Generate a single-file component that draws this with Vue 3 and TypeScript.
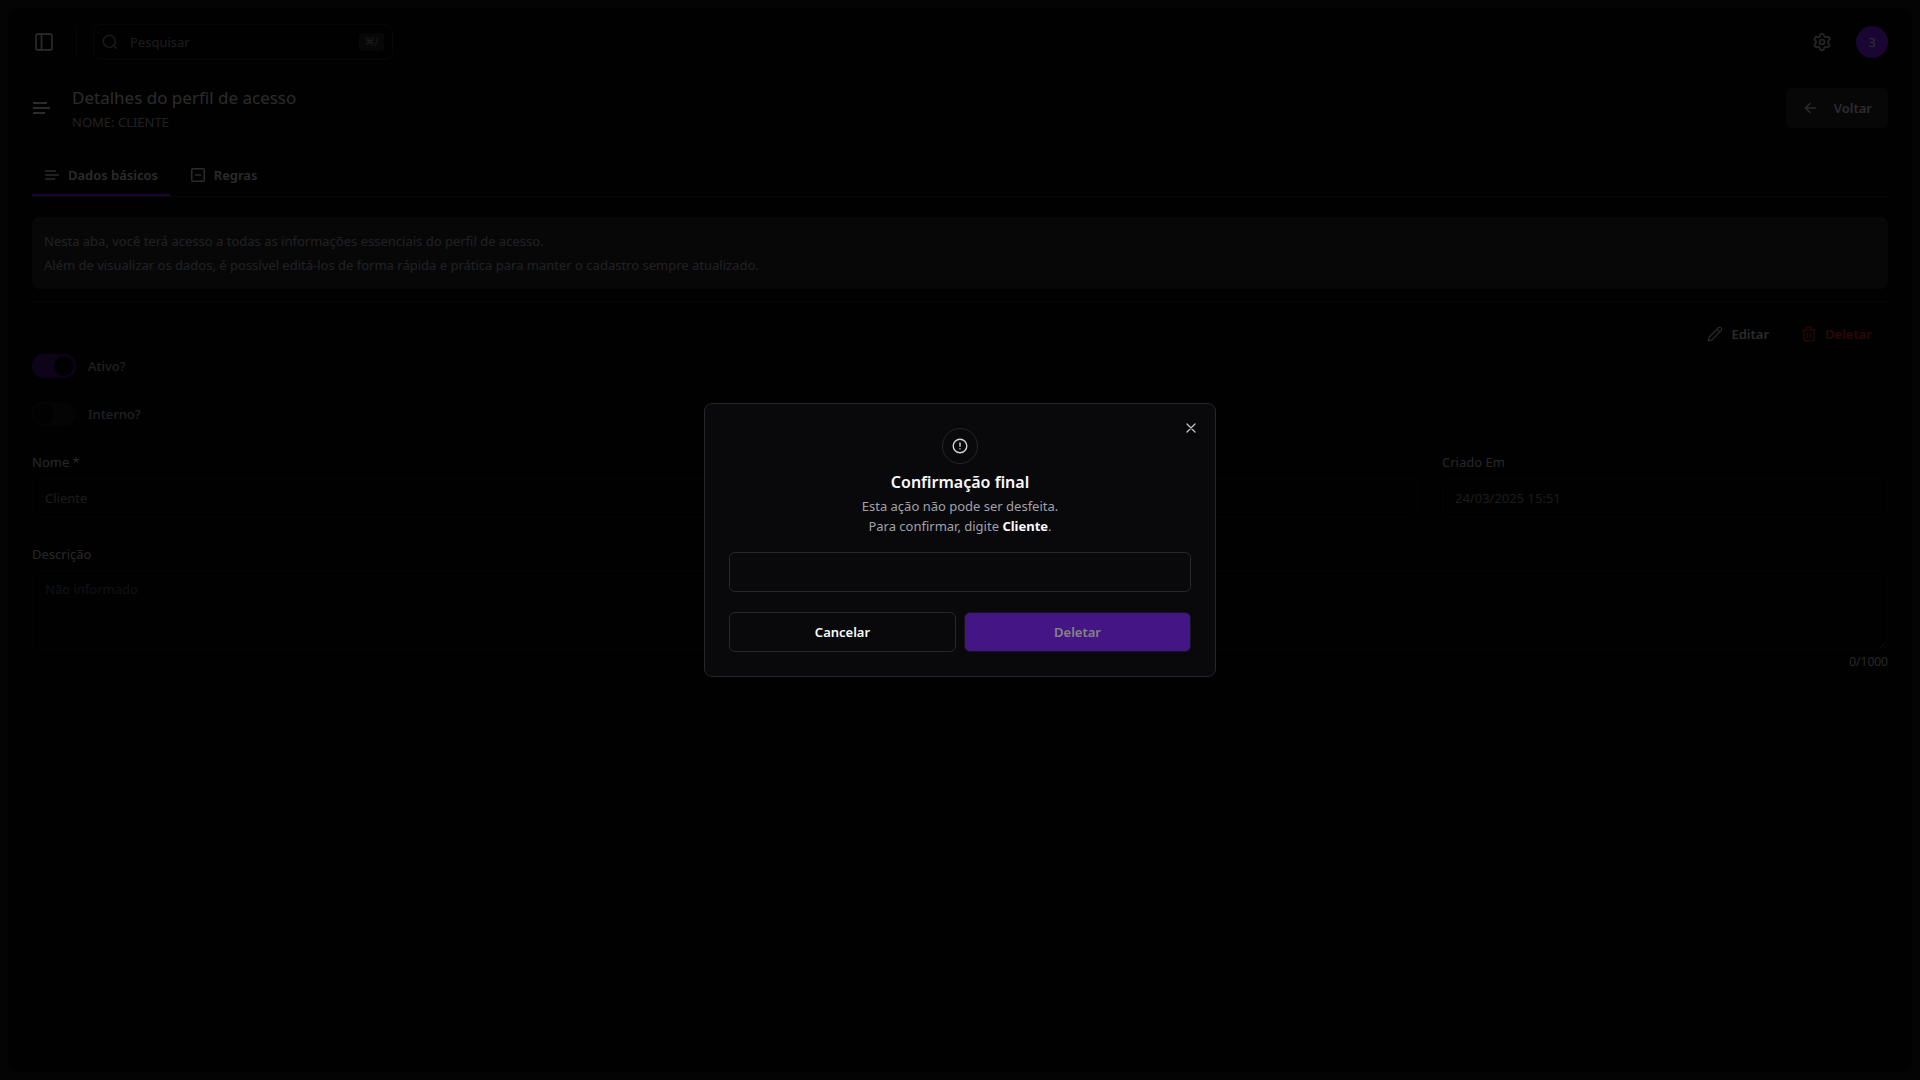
<script setup lang="ts">
import { ref } from 'vue'

const search = ref('')
const active = ref(true)
const internal = ref(false)
const name = ref('Cliente')
const createdAt = ref('24/03/2025 15:51')
const description = ref('')
const confirmation = ref('')
const maxLength = 1000
</script>

<template>
  <div class="shell">
    <div class="panel">
      <header class="topbar">
        <button class="icon-button" type="button" aria-label="Alternar menu">
          <svg width="20" height="20" viewBox="0 0 24 24" fill="none" stroke="currentColor" stroke-width="2" stroke-linecap="round" stroke-linejoin="round">
            <rect x="2.5" y="2.5" width="19" height="19" rx="2" />
            <path d="M9 2.5v19" />
          </svg>
        </button>
        <span class="divider"></span>
        <label class="search">
          <svg width="16" height="16" viewBox="0 0 24 24" fill="none" stroke="currentColor" stroke-width="2" stroke-linecap="round">
            <circle cx="11" cy="11" r="9" />
            <path d="m21.5 21.5-4-4" />
          </svg>
          <input v-model="search" type="text" placeholder="Pesquisar" aria-label="Pesquisar" />
          <kbd>⌘/</kbd>
        </label>
        <div class="topbar-end">
          <button class="icon-button" type="button" aria-label="Configurações">
            <svg width="20" height="20" viewBox="0 0 24 24" fill="none" stroke="currentColor" stroke-width="2" stroke-linecap="round" stroke-linejoin="round">
              <path d="M9.671 4.136a2.34 2.34 0 0 1 4.659 0 2.34 2.34 0 0 0 3.319 1.915 2.34 2.34 0 0 1 2.33 4.033 2.34 2.34 0 0 0 0 3.831 2.34 2.34 0 0 1-2.33 4.033 2.34 2.34 0 0 0-3.319 1.915 2.34 2.34 0 0 1-4.659 0 2.34 2.34 0 0 0-3.32-1.915 2.34 2.34 0 0 1-2.33-4.033 2.34 2.34 0 0 0 0-3.831A2.34 2.34 0 0 1 6.35 6.051a2.34 2.34 0 0 0 3.319-1.915" />
              <circle cx="12" cy="12" r="3" />
            </svg>
          </button>
          <button class="avatar" type="button">3</button>
        </div>
      </header>

      <main class="content">
        <div class="heading">
          <svg width="20" height="20" viewBox="0 0 20 20" fill="none" stroke="currentColor" stroke-width="2">
            <path d="M1 5h14M1 10h17M1 15h12" />
          </svg>
          <div class="heading-text">
            <h1>Detalhes do perfil de acesso</h1>
            <p>NOME: CLIENTE</p>
          </div>
          <button class="back" type="button">
            <svg width="16" height="16" viewBox="0 0 16 16" fill="none" stroke="currentColor" stroke-width="1.5" stroke-linecap="round" stroke-linejoin="round">
              <path d="M13.5 8h-10M8 3.500 3.500 8 8 12.500" />
            </svg>
            Voltar
          </button>
        </div>

        <nav class="tabs">
          <button class="tab tab-active" type="button">
            <svg width="16" height="16" viewBox="0 0 16 16" fill="none" stroke="currentColor" stroke-width="1.500">
              <path d="M1 4h11M1 8h14M1 12h10" />
            </svg>
            Dados básicos
          </button>
          <button class="tab" type="button">
            <svg width="16" height="16" viewBox="0 0 16 16" fill="none" stroke="currentColor" stroke-width="1.500">
              <rect x="1.700" y="1.700" width="12.600" height="12.600" rx="1.500" />
              <path d="M5 8h6" />
            </svg>
            Regras
          </button>
        </nav>

        <div class="notice">
          <p>Nesta aba, você terá acesso a todas as informações essenciais do perfil de acesso.</p>
          <p>Além de visualizar os dados, é possível editá-los de forma rápida e prática para manter o cadastro sempre atualizado.</p>
        </div>

        <hr />

        <div class="actions">
          <button class="action" type="button">
            <svg width="16" height="16" viewBox="0 0 16 16" fill="none" stroke="currentColor" stroke-width="1.200" stroke-linejoin="round">
              <path d="M1.200 14.800 2.200 11 11.300 1.900a1.900 1.900 0 0 1 2.800 2.800L5 13.800ZM10 3.200l2.800 2.800" />
            </svg>
            Editar
          </button>
          <button class="action action-danger" type="button">
            <svg width="16" height="16" viewBox="0 0 16 16" fill="none" stroke="currentColor" stroke-width="1.200" stroke-linejoin="round">
              <path d="M1.500 4h13M5.500 4V1.200h5V4M3 4v9.800a1 1 0 0 0 1 1h8a1 1 0 0 0 1-1V4M6.500 7v5M9.500 7v5" />
            </svg>
            Deletar
          </button>
        </div>

        <div class="switches">
          <label class="switch-row">
            <input v-model="active" type="checkbox" role="switch" disabled />
            <span>Ativo?</span>
          </label>
          <label class="switch-row">
            <input v-model="internal" type="checkbox" role="switch" disabled />
            <span>Interno?</span>
          </label>
        </div>

        <div class="fields">
          <div class="field field-name">
            <label for="name">Nome *</label>
            <input id="name" v-model="name" type="text" disabled />
          </div>
          <div class="field">
            <label for="created">Criado Em</label>
            <input id="created" v-model="createdAt" type="text" disabled />
          </div>
          <div class="field field-full">
            <label for="description">Descrição</label>
            <textarea id="description" v-model="description" placeholder="Não informado" :maxlength="maxLength" disabled></textarea>
            <p class="counter">{{ description.length }}/{{ maxLength }}</p>
          </div>
        </div>
      </main>
    </div>
  </div>

  <div class="overlay">
    <form class="dialog" role="alertdialog" aria-labelledby="dialog-title" aria-describedby="dialog-text" @submit.prevent>
      <button class="close" type="button" aria-label="Fechar">
        <svg width="16" height="16" viewBox="0 0 16 16" fill="none" stroke="currentColor" stroke-width="1.300" stroke-linecap="round">
          <path d="m4 4 8 8M12 4l-8 8" />
        </svg>
      </button>
      <div class="badge">
        <svg width="16" height="16" viewBox="0 0 16 16" fill="none" stroke="currentColor" stroke-width="1.400" stroke-linecap="round">
          <circle cx="8" cy="8" r="6.800" />
          <path d="M8 5v3.300M8 10.700v.1" />
        </svg>
      </div>
      <h2 id="dialog-title">Confirmação final</h2>
      <p id="dialog-text" class="dialog-text">
        Esta ação não pode ser desfeita.<br />
        Para confirmar, digite <strong>Cliente</strong>.
      </p>
      <input v-model="confirmation" class="confirm" type="text" aria-label="Confirmação" />
      <div class="dialog-actions">
        <button class="cancel" type="button">Cancelar</button>
        <button class="delete" type="submit" :disabled="confirmation !== name">Deletar</button>
      </div>
    </form>
  </div>
</template>

<style>
body {
  margin: 0;
  background: #18181b;
}
</style>

<style scoped>
*,
*::before,
*::after {
  box-sizing: border-box;
}

.shell,
.overlay {
  color: #fafafa;
  font-family: 'Noto Sans', 'Open Sans', sans-serif;
  font-size: 13px;
  line-height: 20px;
}

.shell {
  display: flex;
  min-height: 100vh;
  padding: 8px;
  background: #18181b;
}

.panel {
  flex: 1;
  min-width: 0;
  border-radius: 12px;
  background: #070708;
}

h1,
h2,
p {
  margin: 0;
  font-weight: 400;
}

button,
input,
textarea {
  margin: 0;
  color: inherit;
  font: inherit;
}

button {
  display: flex;
  align-items: center;
  padding: 0;
  border: 0;
  background: none;
}

svg {
  display: block;
  flex: none;
}

.topbar {
  display: flex;
  align-items: center;
  height: 68px;
  padding: 0 24px;
}

.icon-button {
  justify-content: center;
  width: 40px;
  height: 40px;
  margin-left: -8px;
}

.topbar > .icon-button {
  color: #d4d4d8;
}

.divider {
  width: 1px;
  height: 32px;
  margin: 0 16px 0 12px;
  background: #27272a;
}

.search {
  display: flex;
  align-items: center;
  gap: 12px;
  width: 300px;
  height: 36px;
  padding: 0 8px;
  border: 1px solid #27272a;
  border-radius: 8px;
  color: #8a8a93;
}

.search input {
  flex: 1;
  min-width: 0;
  padding: 0;
  border: 0;
  outline: 0;
  background: none;
}

.search input::placeholder {
  color: #8a8a93;
  opacity: 1;
}

kbd {
  height: 18px;
  padding: 0 6px;
  border-radius: 4px;
  background: #27272a;
  color: #8a8a93;
  font: 10px/18px 'DejaVu Sans', sans-serif;
}

.topbar-end {
  display: flex;
  align-items: center;
  gap: 14px;
  margin-left: auto;
}

.topbar-end .icon-button {
  color: #c4c4c8;
}

.avatar {
  justify-content: center;
  width: 32px;
  height: 32px;
  border-radius: 50%;
  background: #7f22fe;
  color: #e4e4e7;
}

.content {
  padding: 8px 24px;
}

.heading {
  display: flex;
  align-items: center;
  gap: 20px;
  color: #d4d4d8;
}

.heading-text {
  flex: 1;
}

h1 {
  font-size: 17px;
  line-height: 28px;
}

.heading p {
  color: #a1a1aa;
}

.back {
  gap: 16px;
  height: 40px;
  padding: 0 16px;
  border-radius: 6px;
  background: #27272a;
  color: #d4d4d8;
  font-weight: 600;
}

.tabs {
  display: flex;
  height: 41px;
  margin-top: 24px;
  border-bottom: 1px solid #27272a;
}

.tab {
  gap: 8px;
  padding: 0 12px;
  border-bottom: 2px solid transparent;
  color: #d4d4d8;
  font-weight: 600;
}

.tab + .tab {
  margin-left: 8px;
}

.tab-active {
  border-color: #7f22fe;
}

.notice {
  margin-top: 20px;
  padding: 12px;
  border-radius: 8px;
  background: #27272a;
  color: #a1a1aa;
  line-height: 24px;
}

hr {
  height: 1px;
  margin: 12px 0;
  border: 0;
  background: #27272a;
}

.actions {
  display: flex;
  justify-content: flex-end;
}

.action {
  gap: 8px;
  height: 40px;
  padding: 0 16px;
  color: #d4d4d8;
  font-weight: 600;
}

.action-danger {
  color: #dc2626;
}

.switches {
  display: flex;
  flex-direction: column;
  gap: 24px;
}

.switch-row {
  display: flex;
  align-items: center;
  gap: 12px;
  width: fit-content;
  height: 24px;
  color: #a1a1aa;
  font-weight: 500;
}

.switch-row input {
  display: flex;
  width: 44px;
  height: 24px;
  padding: 2px;
  border-radius: 12px;
  background: #27272a;
  opacity: 0.5;
  appearance: none;
}

.switch-row input::before {
  width: 20px;
  height: 20px;
  border-radius: 50%;
  background: #09090b;
  content: '';
}

.switch-row input:checked {
  justify-content: flex-end;
  background: #7f22fe;
}

.fields {
  display: grid;
  grid-template-columns: repeat(4, 1fr);
  gap: 24px;
  margin-top: 24px;
}

.field {
  display: flex;
  flex-direction: column;
  gap: 4px;
}

.field-name {
  grid-column: span 3;
}

.field-full {
  grid-column: 1 / -1;
}

.field label {
  height: 24px;
  color: #c4c4c8;
  line-height: 24px;
}

.field input,
.field textarea {
  height: 40px;
  padding: 0 12px;
  border: 1px solid #27272a;
  border-radius: 6px;
  background: none;
  opacity: 0.5;
}

.field textarea {
  height: 80px;
  padding: 8px 12px;
  resize: vertical;
}

.field textarea::placeholder {
  color: #a1a1aa;
  opacity: 1;
}

.counter {
  color: #c4c4c8;
  font-size: 12px;
  line-height: 16px;
  text-align: right;
}

.overlay {
  position: fixed;
  inset: 0;
  display: flex;
  align-items: center;
  justify-content: center;
  background: rgba(0, 0, 0, 0.8);
}

.dialog {
  position: relative;
  display: flex;
  flex-direction: column;
  align-items: center;
  width: 100%;
  max-width: 512px;
  padding: 24px;
  border: 1px solid #27272a;
  border-radius: 8px;
  background: #09090b;
}

.close {
  position: absolute;
  top: 16px;
  right: 16px;
  color: #c4c4c8;
}

.badge {
  display: flex;
  align-items: center;
  justify-content: center;
  width: 36px;
  height: 36px;
  border: 1px solid #27272a;
  border-radius: 50%;
  color: #d4d4d8;
}

h2 {
  margin-top: 4px;
  font-size: 16px;
  font-weight: 600;
  line-height: 28px;
}

.dialog-text {
  color: #a1a1aa;
  text-align: center;
}

.dialog-text strong {
  color: #fafafa;
  font-weight: 700;
}

.confirm {
  width: 100%;
  height: 40px;
  margin-top: 16px;
  padding: 0 12px;
  border: 1px solid #27272a;
  border-radius: 6px;
  outline: 0;
  background: none;
}

.dialog-actions {
  display: grid;
  grid-template-columns: 1fr 1fr;
  gap: 8px;
  width: 100%;
  margin-top: 20px;
}

.dialog-actions button {
  justify-content: center;
  height: 40px;
  border: 1px solid #27272a;
  border-radius: 6px;
  font-weight: 600;
}

.delete {
  background: #7f22fe;
}

.delete:disabled {
  opacity: 0.5;
}
</style>
